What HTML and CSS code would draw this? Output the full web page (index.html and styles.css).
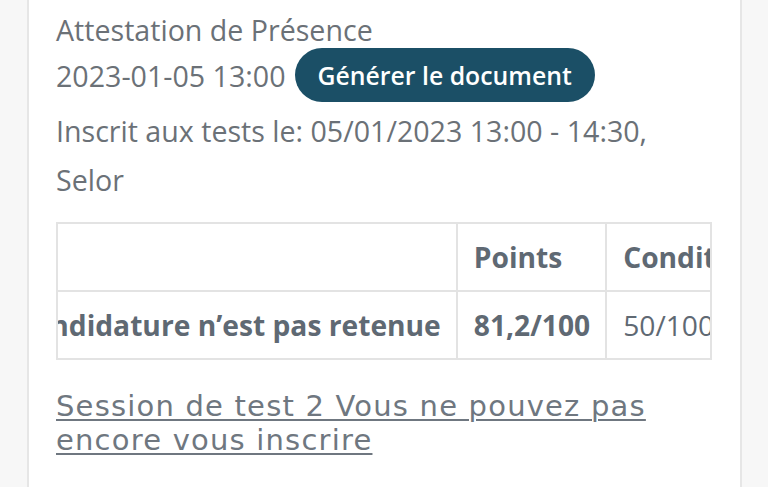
FILE: index.html
```html
<!DOCTYPE html>
<html lang="fr">
<head>
<meta charset="utf-8">
<link rel="stylesheet" href="styles.css">
</head>
<body>
<div class="page">
  <main class="card">
    <div class="title">Attestation de Présence</div>
    <div class="row">
      <span class="date">2023-01-05 13:00</span>
      <button class="btn">Générer le document</button>
    </div>
    <p class="info">Inscrit aux tests le: 05/01/2023 13:00 - 14:30, Selor</p>
    <div class="scroller" id="scroller">
      <table class="results">
        <thead>
          <tr><th id="c1"></th><th>Points</th><th>Conditions</th></tr>
        </thead>
        <tbody>
          <tr><td class="strong">Votre candidature n’est pas retenue</td><td class="strong">81,2/100</td><td>50/100</td></tr>
        </tbody>
      </table>
    </div>
    <a class="link" href="#">Session de test 2 Vous ne pouvez pas encore vous inscrire</a>
  </main>
</div>
<script src="script.js"></script>
</body>
</html>
```
FILE: styles.css
```css
html, body { margin: 0; padding: 0; }
body {
  background: #f7f7f7;
  font-family: "Open Sans", "Liberation Sans", sans-serif;
  overflow: hidden;
}
.page {
  padding-left: 27px;
  height: 487px;
}
.card {
  width: 715px;
  height: 100%;
  background: #fff;
  border-left: 2px solid #e6e6e6;
  border-right: 2px solid #e6e6e6;
  padding: 10px 27px 0;
  box-sizing: border-box;
  color: #6b7177;
  font-size: 28.6px;
}
.title { line-height: 40px; }
.row {
  display: flex;
  align-items: center;
  gap: 9px;
  height: 54px;
  margin-top: -2px;
}
.btn {
  height: 54px;
  border: none;
  border-radius: 27px;
  background: #1b4f66;
  color: #fff;
  font-family: "Open Sans", sans-serif;
  font-weight: 600;
  font-size: 24.8px;
  padding: 0 23px;
}
.info {
  margin: 4px 0 0;
  line-height: 49px;
}
.scroller {
  margin-top: 18px;
  width: 656px;
  box-sizing: border-box;
  border: 2px solid #e3e3e3;
  overflow: hidden;
}
.results {
  border-collapse: collapse;
  border-style: hidden;
  white-space: nowrap;
  color: #5f6973;
  font-size: 28.2px;
}
.results th, .results td {
  border: 2px solid #e3e3e3;
  height: 66px;
  padding: 0 15px 0 16px;
  text-align: left;
}
.results th { font-weight: 700; }
.results td.strong { font-weight: 700; }
.link {
  display: block;
  margin-top: 29px;
  font-family: "DejaVu Sans", "Liberation Sans", sans-serif;
  font-size: 29px;
  letter-spacing: 1.2px;
  line-height: 34px;
  color: #6f7780;
  text-decoration: underline;
  text-decoration-thickness: 2px;
  text-underline-offset: 3px;
}
```
FILE: script.js
```js
(function () {
  var s = document.getElementById('scroller');
  var c = document.getElementById('c1');
  var visible = 457 - 58;
  s.scrollLeft = Math.max(0, c.offsetLeft + c.offsetWidth - visible);
})();
```
